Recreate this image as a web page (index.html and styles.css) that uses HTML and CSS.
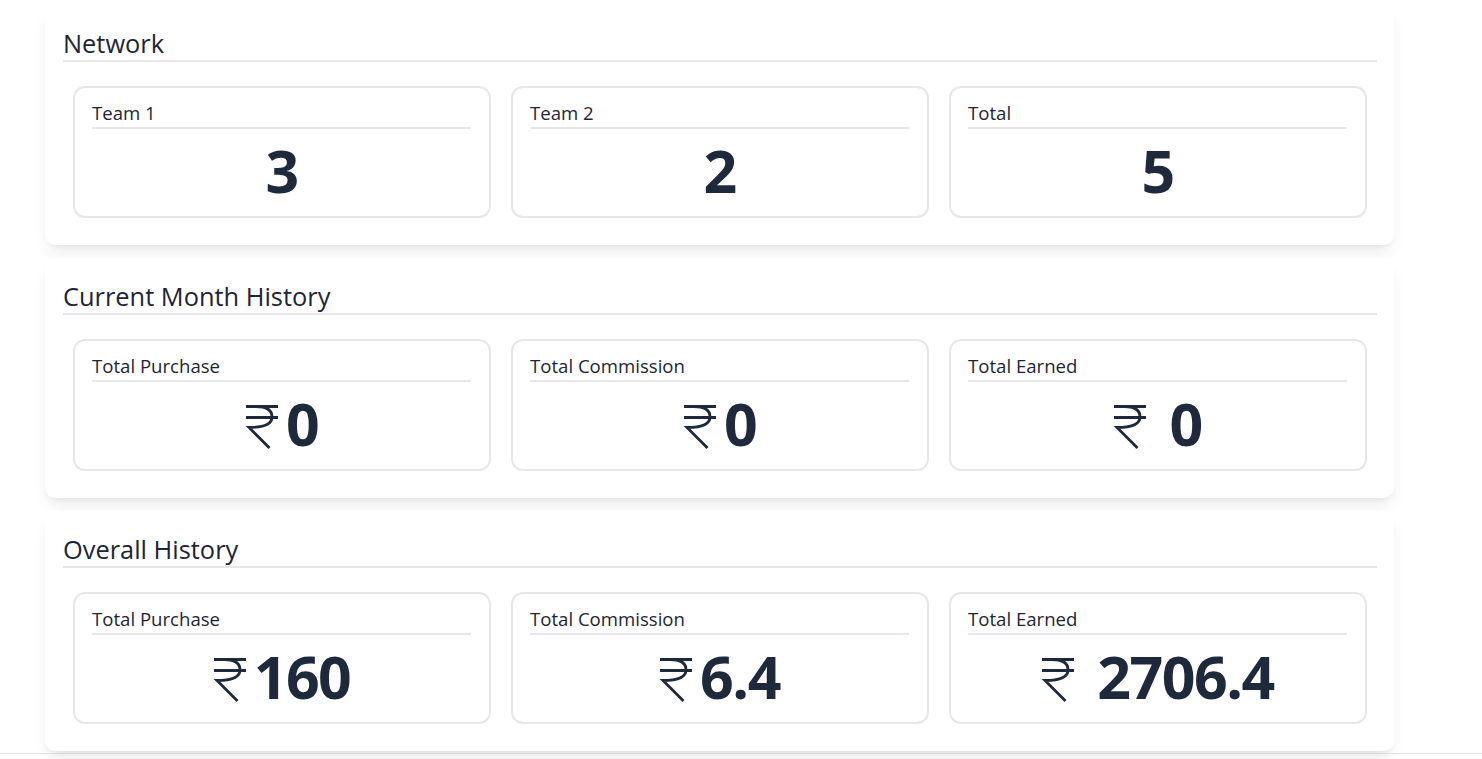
FILE: index.html
```html
<!DOCTYPE html>
<html lang="en">
<head>
<meta charset="utf-8">
<title>Dashboard</title>
<link rel="stylesheet" href="styles.css">
</head>
<body>
<main class="page">
  <section class="card">
    <h2 class="card-title">Network</h2>
    <div class="stats">
      <div class="stat"><div class="stat-label">Team 1</div><div class="stat-value"><span class="num">3</span></div></div>
      <div class="stat"><div class="stat-label">Team 2</div><div class="stat-value"><span class="num">2</span></div></div>
      <div class="stat"><div class="stat-label">Total</div><div class="stat-value"><span class="num">5</span></div></div>
    </div>
  </section>

  <section class="card">
    <h2 class="card-title">Current Month History</h2>
    <div class="stats">
      <div class="stat"><div class="stat-label">Total Purchase</div><div class="stat-value"><svg class="rupee" viewBox="0 0 34 46" aria-hidden="true"><path d="M1 3.5H33M1 14.5H33M11 3.5C23 3.5 27 8 27 14C27 20 21 24.5 4 24.5L24.5 45"/></svg><span class="num">0</span></div></div>
      <div class="stat"><div class="stat-label">Total Commission</div><div class="stat-value"><svg class="rupee" viewBox="0 0 34 46" aria-hidden="true"><path d="M1 3.5H33M1 14.5H33M11 3.5C23 3.5 27 8 27 14C27 20 21 24.5 4 24.5L24.5 45"/></svg><span class="num">0</span></div></div>
      <div class="stat"><div class="stat-label">Total Earned</div><div class="stat-value wide"><svg class="rupee" viewBox="0 0 34 46" aria-hidden="true"><path d="M1 3.5H33M1 14.5H33M11 3.5C23 3.5 27 8 27 14C27 20 21 24.5 4 24.5L24.5 45"/></svg><span class="num">0</span></div></div>
    </div>
  </section>

  <section class="card">
    <h2 class="card-title">Overall History</h2>
    <div class="stats">
      <div class="stat"><div class="stat-label">Total Purchase</div><div class="stat-value"><svg class="rupee" viewBox="0 0 34 46" aria-hidden="true"><path d="M1 3.5H33M1 14.5H33M11 3.5C23 3.5 27 8 27 14C27 20 21 24.5 4 24.5L24.5 45"/></svg><span class="num">160</span></div></div>
      <div class="stat"><div class="stat-label">Total Commission</div><div class="stat-value"><svg class="rupee" viewBox="0 0 34 46" aria-hidden="true"><path d="M1 3.5H33M1 14.5H33M11 3.5C23 3.5 27 8 27 14C27 20 21 24.5 4 24.5L24.5 45"/></svg><span class="num">6.4</span></div></div>
      <div class="stat"><div class="stat-label">Total Earned</div><div class="stat-value wide"><svg class="rupee" viewBox="0 0 34 46" aria-hidden="true"><path d="M1 3.5H33M1 14.5H33M11 3.5C23 3.5 27 8 27 14C27 20 21 24.5 4 24.5L24.5 45"/></svg><span class="num">2706.4</span></div></div>
    </div>
  </section>
</main>
<div class="footer-rule"></div>
</body>
</html>
```
FILE: styles.css
```css
* { box-sizing: border-box; }

html, body {
  margin: 0;
  padding: 0;
  background: #ffffff;
  font-family: "Open Sans", "Noto Sans", "Liberation Sans", sans-serif;
  color: #1f2937;
}

body { overflow: hidden; height: 759px; }

.page {
  display: flex;
  flex-direction: column;
  gap: 13px;
  padding: 5px 0 0 45px;
}

.card {
  width: 1349px;
  height: 240px;
  background: #fff;
  border-radius: 10px;
  padding: 21px 17px 0 18px;
  box-shadow: 0 10px 15px -3px rgba(0, 0, 0, 0.08), 0 4px 6px -4px rgba(0, 0, 0, 0.08);
}

.card-title {
  margin: 0;
  font-size: 25.4px;
  font-weight: 400;
  line-height: 34px;
  color: #1e2535;
  border-bottom: 2px solid #e5e7eb;
}

.stats {
  display: grid;
  grid-template-columns: repeat(3, 1fr);
  gap: 20px;
  padding: 0 10px;
  margin-top: 24px;
}

.stat {
  height: 132px;
  border: 2px solid #e5e7eb;
  border-radius: 12px;
  padding: 12px 18px 0 17px;
}

.stat-label {
  font-size: 18.6px;
  line-height: 25px;
  padding-bottom: 2px;
  border-bottom: 2px solid #e5e7eb;
  color: #1e2535;
}

.stat-value {
  display: flex;
  justify-content: center;
  align-items: center;
  gap: 7px;
  margin-top: 11px;
  height: 60px;
}

.stat-value.wide { gap: 22px; }

.num {
  font-size: 59px;
  font-weight: 700;
  line-height: 60px;
  color: #1e293b;
  letter-spacing: -1.5px;
}

.rupee {
  width: 34px;
  height: 46px;
  margin-top: 6px;
  fill: none;
  stroke: #1e293b;
  stroke-width: 2.8;
}

.footer-rule {
  margin-top: 2px;
  border-top: 1px solid #e5e7eb;
}
```
